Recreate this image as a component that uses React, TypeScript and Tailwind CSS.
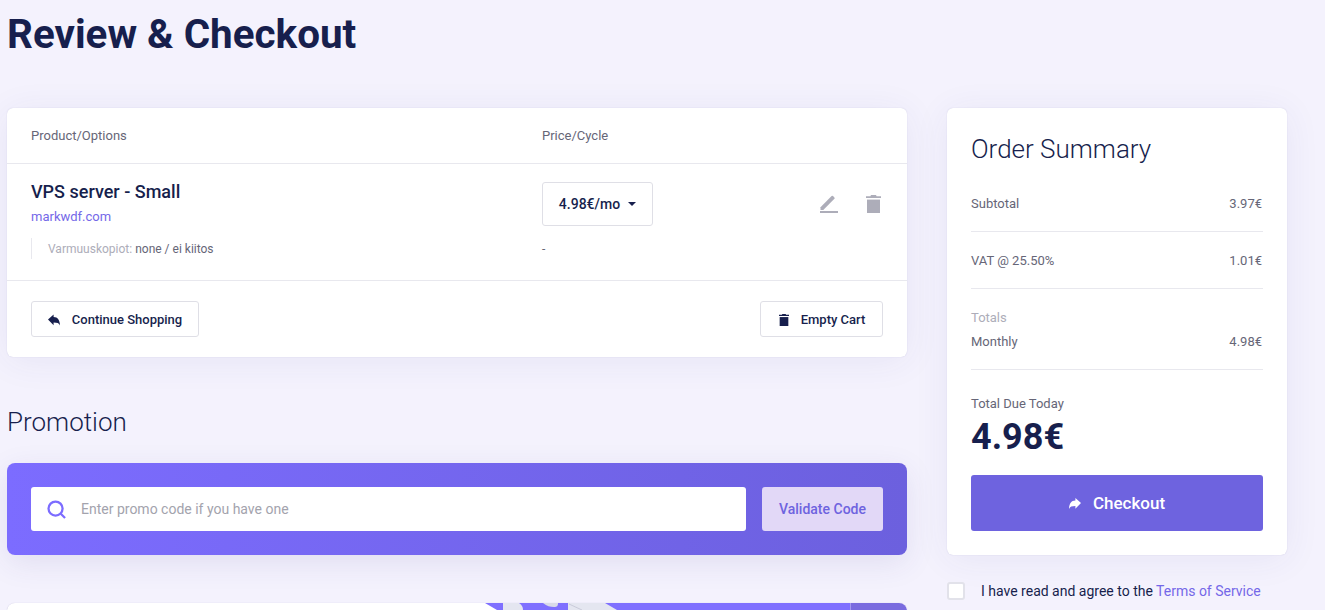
const TrashIcon = ({ className }: { className: string }) => (
  <svg viewBox="0 0 15 18" className={className} fill="currentColor">
    <path d="M5 0h5l.6 1.2H15V3H0V1.2h4.4L5 0z" />
    <path d="M1 4.6h13V18H1z" />
  </svg>
);

const PenIcon = () => (
  <svg viewBox="0 0 18 18" className="h-[18px] w-[18px] text-[#adadb9]" fill="currentColor">
    <path d="M0.5 12.2 11.6 1a1 1 0 0 1 1.4 0l1.4 1.4a1 1 0 0 1 0 1.4L3.3 15H0.5z" />
    <path d="M0 16h18v2H0z" />
  </svg>
);

// reply arrow, flipped for the checkout button
const ArrowIcon = ({ className }: { className: string }) => (
  <svg viewBox="0 0 12 11" className={className} fill="currentColor">
    <path d="M0 4.9 5.6 0v2.4c4.2 0 6.2 3 6.4 8.6-1-2.4-2.8-3-6.4-3v2.8L0 4.9z" />
  </svg>
);

const SummaryRow = ({ label, value }: { label: string; value: string }) => (
  <div className="flex justify-between pr-px text-[13px] leading-5 text-[#666677]">
    <span>{label}</span>
    <span>{value}</span>
  </div>
);

export default function App() {
  return (
    <div className="h-[610px] overflow-hidden bg-[#f4f2fd] pl-[7px] font-['Roboto',sans-serif] text-[#171f4d]">
      <h1 className="pt-[10px] text-[40.4px] leading-[50px] font-bold">Review &amp; Checkout</h1>

      <div className="mt-[48px] flex items-start gap-10">
        {/* Left column */}
        <div className="w-[900px] shrink-0">
          <div className="rounded-md bg-white shadow-[0_0_1px_rgba(60,50,140,0.25),0_4px_36px_rgba(60,50,140,0.07)]">
            <div className="flex h-14 items-center border-b border-[#e8e8ee] px-6 text-[13px] text-[#666677]">
              <span className="w-[511px]">Product/Options</span>
              <span>Price/Cycle</span>
            </div>

            <div className="flex h-[117px] border-b border-[#e8e8ee] px-6">
              <div className="w-[511px] pt-[16px]">
                <div className="text-lg leading-6 font-medium">VPS server - Small</div>
                <div className="mt-[3px] text-[13px] leading-5 text-[#7468e8]">markwdf.com</div>
                <div className="mt-[11px] flex h-[21px] items-center border-l border-[#e8e8ee] pl-4 text-xs">
                  <span className="text-[#adadb9]">Varmuuskopiot:</span>
                  <span className="ml-[3px] text-[#666677]">none / ei kiitos</span>
                </div>
              </div>
              <div className="pt-[18px]">
                <button className="flex h-11 w-[111px] items-center justify-center gap-2 rounded-[3px] border border-[#dfdfe6] text-sm font-medium">
                  4.98€/mo
                  <span className="h-0 w-0 border-x-[4px] border-t-[4px] border-x-transparent border-t-[#171f4d]" />
                </button>
                <div className="mt-[15px] text-xs leading-4 text-[#666677]">-</div>
              </div>
              <div className="ml-auto flex gap-[28px] pt-[31px] pr-[2px]">
                <PenIcon />
                <TrashIcon className="h-[18px] w-[15px] text-[#adadb9]" />
              </div>
            </div>

            <div className="flex h-[76px] items-center justify-between px-6">
              <button className="flex h-9 w-[168px] items-center justify-center gap-3 rounded-[3px] border border-[#dfdfe6] pt-px text-[13px] font-medium">
                <ArrowIcon className="h-3 w-3" />
                Continue Shopping
              </button>
              <button className="flex h-9 w-[123px] items-center justify-center gap-3 rounded-[3px] border border-[#dfdfe6] pt-px pl-px text-[13px] font-medium">
                <TrashIcon className="h-3 w-[10px]" />
                Empty Cart
              </button>
            </div>
          </div>

          <h2 className="mt-[47px] text-[26px] leading-[36px] font-light">Promotion</h2>

          <div className="mt-[23px] flex h-[92px] items-center gap-4 rounded-lg bg-gradient-to-r from-[#7c6cff] to-[#6c60de] px-6 shadow-[0_8px_30px_rgba(60,50,140,0.1)]">
            <div className="flex h-11 flex-1 items-center rounded-[3px] bg-white pl-4">
              <svg viewBox="0 0 20 20" className="h-[19px] w-[19px] text-[#7c6cff]" fill="none" stroke="currentColor" strokeWidth="2.4">
                <circle cx="9" cy="9" r="7.4" />
                <path d="m14.5 14.5 4.5 4.5" />
              </svg>
              <span className="ml-[15px] text-sm text-[#a3a3ad]">Enter promo code if you have one</span>
            </div>
            <button className="h-11 w-[121px] rounded-[3px] bg-[#e2d8f7] text-sm font-medium text-[#6e63df]">Validate Code</button>
          </div>

          <div className="mt-[48px] flex h-10 overflow-hidden rounded-lg bg-white shadow-[0_0_1px_rgba(60,50,140,0.25)]">
            <div className="w-[478px]" />
            <svg viewBox="0 0 135 40" className="h-10 w-[135px]">
              <rect width="135" height="40" fill="#7f70ff" />
              <path d="M0 0l12 7H0z" fill="#fff" />
              <path d="M18 0h16c3 2 4 4 4 7H18z" fill="#e4e6f0" />
              <path d="M58 0h15c0 3-1 4-4 4-4 0-7-1-11-4z" fill="#d9dbe8" />
              <path d="M83 0h37l12 7H83z" fill="#e4e6f0" />
              <path d="M84 1l13 6" stroke="#c9cbd9" fill="none" />
            </svg>
            <div className="flex-1 bg-[#7f70ff]" />
            <div className="w-[57px] border-l border-[#a49af0] bg-[#7a6cdf]" />
          </div>
        </div>

        {/* Order summary */}
        <div className="w-[340px] shrink-0">
          <div className="rounded-md bg-white px-6 pt-[22px] pb-6 shadow-[0_0_1px_rgba(60,50,140,0.25),0_4px_36px_rgba(60,50,140,0.07)]">
            <h2 className="text-[26px] leading-[38px] font-light">Order Summary</h2>
            <div className="mt-[26px] border-b border-[#e8e8ee] pb-[17px]">
              <SummaryRow label="Subtotal" value="3.97€" />
            </div>
            <div className="border-b border-[#e8e8ee] pt-[19px] pb-[17px]">
              <SummaryRow label="VAT @ 25.50%" value="1.01€" />
            </div>
            <div className="border-b border-[#e8e8ee] pt-[19px] pb-[17px]">
              <div className="text-[13px] leading-5 text-[#adadb9]">Totals</div>
              <div className="mt-1">
                <SummaryRow label="Monthly" value="4.98€" />
              </div>
            </div>
            <div className="mt-6 text-[13px] leading-5 text-[#666677]">Total Due Today</div>
            <div className="text-[36px] leading-[46px] font-bold">4.98€</div>
            <button className="mt-[15px] flex h-14 w-full items-center justify-center gap-3 rounded-[3px] bg-[#6e63df] pt-px text-[17px] font-medium text-white">
              <ArrowIcon className="h-[11px] w-3 -scale-x-100" />
              Checkout
            </button>
          </div>
          <label className="mt-[26px] flex items-center gap-[16px] text-sm leading-5">
            <span className="h-[18px] w-[18px] rounded-[3px] border-2 border-[#e2e2ea] bg-white" />
            <span>
              I have read and agree to the <span className="text-[#7468e8]">Terms of Service</span>
            </span>
          </label>
        </div>
      </div>
    </div>
  );
}
